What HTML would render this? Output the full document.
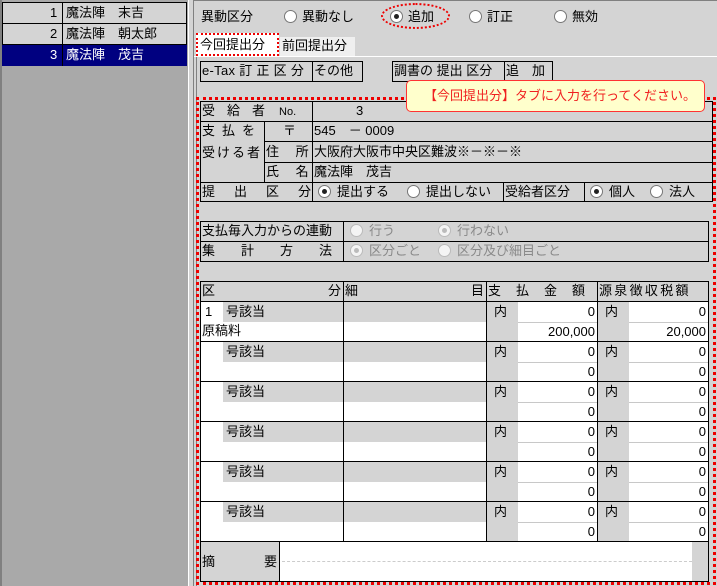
<!DOCTYPE html>
<html><head><meta charset="utf-8"><style>
*{box-sizing:border-box;margin:0;padding:0}
body{width:717px;height:586px;overflow:hidden;background:#d4d4d4;font-family:"Liberation Sans","Noto Sans CJK JP","IPAGothic",sans-serif;font-size:13px;color:#000;position:relative}
.a{position:absolute}
.b{position:absolute;border:1px solid #000}
.t{position:absolute;white-space:nowrap;line-height:20px}
.r{position:absolute;width:13px;height:13px;border-radius:50%;background:#fff;border:1px solid #777}
.r.on::after{content:"";position:absolute;left:3px;top:3px;width:5px;height:5px;border-radius:50%;background:#222}
.r.dis{background:#f4f4f4;border-color:#bbb}
.r.dis.on::after{background:#bbb}
.g{color:#8a8a8a}
.w{position:absolute;background:#fff}
.gr{position:absolute;background:#d4d4d4}
.hl{position:absolute;height:1px;background:#000}
.vl{position:absolute;width:1px;background:#000}
.lg{position:absolute;height:1px;background:#c8c8c8}
</style></head><body>
<!-- left pane -->
<div class="a" style="left:0;top:0;width:188px;height:586px;background:#a9a9a9;border-left:2px solid #808080"></div>
<div class="a" style="left:2px;top:2px;width:185px;height:64px;border:1px solid #000;background:#d4d4d4"></div>
<div class="a" style="left:2px;top:44px;width:185px;height:22px;background:#000080"></div>
<div class="hl" style="left:2px;top:23px;width:185px"></div>
<div class="hl" style="left:2px;top:44px;width:185px"></div>
<div class="vl" style="left:62px;top:2px;height:64px"></div>
<div class="t" style="left:50px;top:3px">1</div><div class="t" style="left:66px;top:3px">魔法陣　末吉</div>
<div class="t" style="left:50px;top:24px">2</div><div class="t" style="left:66px;top:24px">魔法陣　朝太郎</div>
<div class="t" style="left:50px;top:45px;color:#fff">3</div><div class="t" style="left:66px;top:45px;color:#fff">魔法陣　茂吉</div>
<!-- splitter -->
<div class="a" style="left:188px;top:0;width:6px;height:586px;background:#d4d4d4;border-left:1px solid #fff;border-right:1px solid #808080"></div>
<div class="hl" style="left:194px;top:0;width:523px;background:#808080"></div>
<!-- top radios -->
<div class="t" style="left:201px;top:7px">異動区分</div>
<div class="r" style="left:284px;top:10px"></div><div class="t" style="left:302px;top:7px">異動なし</div>
<div class="r on" style="left:390px;top:10px"></div><div class="t" style="left:408px;top:7px">追加</div>
<div class="a" style="left:381px;top:3px;width:69px;height:26px;border:2px dotted #e00;border-radius:50%"></div>
<div class="r" style="left:469px;top:10px"></div><div class="t" style="left:487px;top:7px">訂正</div>
<div class="r" style="left:554px;top:10px"></div><div class="t" style="left:572px;top:7px">無効</div>
<!-- tabs -->
<div class="a" style="left:194px;top:56px;width:523px;height:1px;background:#fff"></div>
<div class="a" style="left:280px;top:37px;width:75px;height:19px;background:#efefef"></div>
<div class="t" style="left:282px;top:36px">前回提出分</div>
<div class="a" style="left:196px;top:33px;width:83px;height:23px;background:#fff;border:2px dotted #e00"></div>
<div class="t" style="left:200px;top:35px">今回提出分</div>
<div class="vl" style="left:196px;top:57px;height:529px;background:#808080"></div>
<!-- e-tax boxes -->
<div class="b" style="left:200px;top:61px;width:163px;height:21px"></div>
<div class="vl" style="left:312px;top:61px;height:21px"></div>
<div class="t" style="left:202px;top:61px;letter-spacing:0.3px">e-Tax 訂 正 区 分</div><div class="t" style="left:314px;top:61px">その他</div>
<div class="b" style="left:392px;top:61px;width:161px;height:21px"></div>
<div class="vl" style="left:504px;top:61px;height:21px"></div>
<div class="t" style="left:394px;top:61px">調書の 提出 区分</div><div class="t" style="left:506px;top:61px">追　加</div>
<!-- red dotted frame -->
<div class="a" style="left:196px;top:97px;width:520px;height:488px;border:3px dotted #e00"></div>
<!-- table1 -->
<div class="b" style="left:200px;top:101px;width:513px;height:101px"></div>
<div class="hl" style="left:200px;top:121px;width:513px"></div>
<div class="hl" style="left:264px;top:141px;width:449px"></div>
<div class="hl" style="left:264px;top:162px;width:449px"></div>
<div class="hl" style="left:200px;top:182px;width:513px"></div>
<div class="vl" style="left:312px;top:101px;height:101px"></div>
<div class="vl" style="left:264px;top:121px;height:61px"></div>
<div class="vl" style="left:503px;top:182px;height:20px"></div>
<div class="vl" style="left:584px;top:182px;height:20px"></div>
<div class="t" style="left:202px;top:101px;width:108px;letter-spacing:12px">受給者<span style="letter-spacing:0;font-size:11px;margin-left:2px">No.</span></div>
<div class="t" style="left:356px;top:101px">3</div>
<div class="t" style="left:202px;top:121px;letter-spacing:7px">支払を</div>
<div class="t" style="left:202px;top:143px;letter-spacing:2px">受ける者</div>
<div class="t" style="left:283px;top:121px">〒</div>
<div class="t" style="left:314px;top:121px">545　－ 0009</div>
<div class="t" style="left:266px;top:142px">住　 所</div>
<div class="t" style="left:314px;top:142px">大阪府大阪市中央区難波※－※－※</div>
<div class="t" style="left:266px;top:162px">氏　 名</div>
<div class="t" style="left:314px;top:162px">魔法陣　茂吉</div>
<div class="t" style="left:202px;top:182px;letter-spacing:19px">提出区分</div>
<div class="r on" style="left:318px;top:185px"></div><div class="t" style="left:337px;top:182px">提出する</div>
<div class="r" style="left:407px;top:185px"></div><div class="t" style="left:426px;top:182px">提出しない</div>
<div class="t" style="left:505px;top:182px">受給者区分</div>
<div class="r on" style="left:590px;top:185px"></div><div class="t" style="left:609px;top:182px">個人</div>
<div class="r" style="left:650px;top:185px"></div><div class="t" style="left:669px;top:182px">法人</div>
<!-- table2 -->
<div class="b" style="left:200px;top:221px;width:509px;height:41px"></div>
<div class="hl" style="left:200px;top:241px;width:509px"></div>
<div class="vl" style="left:343px;top:221px;height:41px"></div>
<div class="t" style="left:202px;top:221px">支払毎入力からの連動</div>
<div class="t" style="left:202px;top:241px;width:140px;letter-spacing:26px">集計方法</div>
<div class="r dis" style="left:350px;top:224px"></div><div class="t g" style="left:369px;top:221px">行う</div>
<div class="r dis on" style="left:438px;top:224px"></div><div class="t g" style="left:457px;top:221px">行わない</div>
<div class="r dis on" style="left:350px;top:244px"></div><div class="t g" style="left:369px;top:241px">区分ごと</div>
<div class="r dis" style="left:438px;top:244px"></div><div class="t g" style="left:457px;top:241px">区分及び細目ごと</div>
<!-- table3 -->
<div class="b" style="left:200px;top:281px;width:509px;height:301px"></div>
<!-- rows whites -->
<div class="w" style="left:201px;top:302px;width:507px;height:239px"></div>
<div id="rows"></div>
<div class="hl" style="left:200px;top:301px;width:509px"></div>
<div class="vl" style="left:343px;top:281px;height:261px"></div>
<div class="vl" style="left:486px;top:281px;height:261px"></div>
<div class="vl" style="left:597px;top:281px;height:261px"></div>
<div class="hl" style="left:200px;top:541px;width:509px"></div>
<div class="t" style="left:202px;top:281px">区</div><div class="t" style="left:328px;top:281px">分</div>
<div class="t" style="left:345px;top:281px">細</div><div class="t" style="left:471px;top:281px">目</div>
<div class="t" style="left:488px;top:281px;letter-spacing:15px">支払金額</div>
<div class="t" style="left:599px;top:281px;letter-spacing:2.3px">源泉徴収税額</div>
<!-- 摘要 -->
<div class="w" style="left:280px;top:542px;width:412px;height:39px"></div>
<div class="vl" style="left:279px;top:541px;height:41px"></div>
<div class="a" style="left:282px;top:561px;width:410px;border-top:1px dashed #ccc"></div>
<div class="t" style="left:202px;top:552px">摘</div><div class="t" style="left:264px;top:552px">要</div>
<!-- tooltip -->
<div class="a" style="left:406px;top:80px;width:299px;height:32px;background:#ffffcc;border:1px solid #f33;border-radius:5px"></div>
<div class="t" style="left:424px;top:86px;color:#f02020">【今回提出分】タブに入力を行ってください。</div>
<script>
var h='';var ys=[301,341,381,421,461,501];
ys.forEach(function(y,i){
h+='<div class="gr" style="left:223px;top:'+(y+1)+'px;width:263px;height:20px"></div>';
h+='<div class="gr" style="left:487px;top:'+(y+1)+'px;width:31px;height:40px"></div>';
h+='<div class="gr" style="left:598px;top:'+(y+1)+'px;width:31px;height:40px"></div>';
h+='<div class="lg" style="left:518px;top:'+(y+21)+'px;width:79px"></div>';
h+='<div class="lg" style="left:629px;top:'+(y+21)+'px;width:79px"></div>';
if(i>0)h+='<div class="hl" style="left:200px;top:'+y+'px;width:509px"></div>';
h+='<div class="t" style="left:226px;top:'+(y+1)+'px">号該当</div>';
h+='<div class="t" style="left:494px;top:'+(y+1)+'px">内</div>';
h+='<div class="t" style="left:605px;top:'+(y+1)+'px">内</div>';
h+='<div class="t" style="left:520px;top:'+(y+1)+'px;width:75px;text-align:right">0</div>';
h+='<div class="t" style="left:631px;top:'+(y+1)+'px;width:75px;text-align:right">0</div>';
h+='<div class="t" style="left:520px;top:'+(y+21)+'px;width:75px;text-align:right">'+(i==0?'200,000':'0')+'</div>';
h+='<div class="t" style="left:631px;top:'+(y+21)+'px;width:75px;text-align:right">'+(i==0?'20,000':'0')+'</div>';
});
h+='<div class="t" style="left:205px;top:302px">1</div><div class="t" style="left:202px;top:321px">原稿料</div>';
document.getElementById('rows').outerHTML=h;
</script>
</body></html>
